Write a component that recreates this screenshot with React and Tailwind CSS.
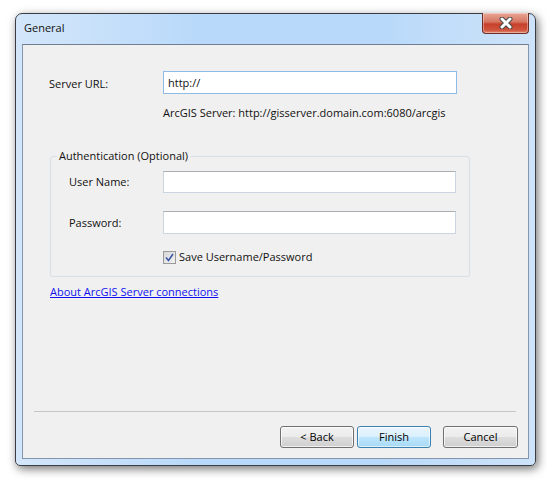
export default function App() {
  const btn =
    "h-[22px] rounded-[3px] border border-[#707070] bg-[linear-gradient(to_bottom,#f2f2f2_0%,#ebebeb_50%,#dddddd_51%,#cfcfcf_100%)] text-[11px] text-black shadow-[inset_0_0_0_1px_rgba(255,255,255,0.7)]";

  return (
    <div className="min-h-screen bg-white pl-[15px] pt-[13px] font-['Open_Sans',sans-serif] text-[11px] leading-[16px] text-[#111]">
      {/* Window frame */}
      <div className="relative flex h-[453px] w-[521px] flex-col rounded-t-[7px] rounded-b-[5px] border border-[#3a3e44] bg-[linear-gradient(to_right,#d3e6fa,#b9d9fa_35%,#b9d9fa_70%,#cde3f9)] px-[6px] pb-[6px] shadow-[2px_3px_10px_rgba(0,0,0,0.55)]">
        {/* Title bar */}
        <div className="flex h-[30px] items-center pl-[2px] pb-[2px] text-[11px]">General</div>

        {/* Close button */}
        <div className="absolute right-[6px] top-[-1px] flex h-[21px] w-[47px] items-center justify-center rounded-b-[4px] border border-t-0 border-[#6e2d25] bg-[linear-gradient(to_bottom,#e9a796_0%,#d67561_45%,#c6402a_55%,#d0543d_85%,#e08a6f_100%)] shadow-[inset_0_0_0_1px_rgba(255,255,255,0.35)]">
          <svg width="16" height="12" viewBox="0 0 16 12">
            <path d="M4 2 L12 10 M12 2 L4 10" stroke="#4a4a4a" strokeWidth="5" strokeLinecap="round" />
            <path d="M4 2 L12 10 M12 2 L4 10" stroke="#ffffff" strokeWidth="3" strokeLinecap="round" />
          </svg>
        </div>

        {/* Client area */}
        <div className="flex flex-1 flex-col border border-[#8496ab] border-t-[#6f7f90] bg-[#f0f0f0]">
          {/* Server URL row */}
          <div className="mt-[26px] flex items-center">
            <div className="w-[140px] pl-[26px] pt-[2px]">Server URL:</div>
            <div className="flex h-[23px] w-[294px] items-center border border-[#8fbbe6] bg-white pl-[4px]">http://</div>
          </div>
          <div className="mt-[11px] pl-[140px]">ArcGIS Server: http://gisserver.domain.com:6080/arcgis</div>

          {/* Authentication group */}
          <fieldset className="ml-[27px] mt-[27px] w-[420px] rounded-[3px] border border-[#d5dfe5] pb-[11px] pl-[18px]">
            <legend className="ml-[-12px] px-[2px]">Authentication (Optional)</legend>
            <div className="mt-[7px] flex items-center">
              <div className="w-[94px]">User Name:</div>
              <div className="h-[22px] w-[293px] border border-[#c9d6e2] border-t-[#abadb3] bg-white"></div>
            </div>
            <div className="mt-[18px] flex items-center">
              <div className="w-[94px]">Password:</div>
              <div className="h-[23px] w-[293px] border border-[#c9d6e2] border-t-[#abadb3] bg-white"></div>
            </div>
            <div className="mt-[15px] flex items-center pl-[94px]">
              <div className="flex h-[13px] w-[13px] items-center justify-center border border-[#9a9a9a] bg-[linear-gradient(135deg,#d8d8d8,#f2f2f2)]">
                <svg width="9" height="9" viewBox="0 0 9 9">
                  <path d="M1 4.5 L3.5 7.5 L8 1" fill="none" stroke="#3a56a6" strokeWidth="1.6" />
                </svg>
              </div>
              <span className="ml-[3px]">Save Username/Password</span>
            </div>
          </fieldset>

          <div className="ml-[27px] mt-[7px]">
            <a href="#" className="text-[#1010f0] underline">About ArcGIS Server connections</a>
          </div>

          <div className="flex-1"></div>

          {/* Separator */}
          <div className="ml-[11px] h-px w-[482px] bg-[#c6c6c6]"></div>

          {/* Buttons */}
          <div className="mt-[14px] mb-[10px] flex justify-end pr-[10px]">
            <button className={`${btn} w-[74px]`}>&lt; Back</button>
            <button className="ml-[3px] h-[22px] w-[74px] rounded-[3px] border border-[#3c7fb1] bg-[linear-gradient(to_bottom,#eaf6fd_0%,#d9f0fc_50%,#bee6fd_51%,#a7d9f5_100%)] text-[11px] text-black shadow-[inset_0_0_0_1px_rgba(255,255,255,0.6)]">Finish</button>
            <button className={`${btn} ml-[12px] w-[75px]`}>Cancel</button>
          </div>
        </div>
      </div>
    </div>
  );
}
